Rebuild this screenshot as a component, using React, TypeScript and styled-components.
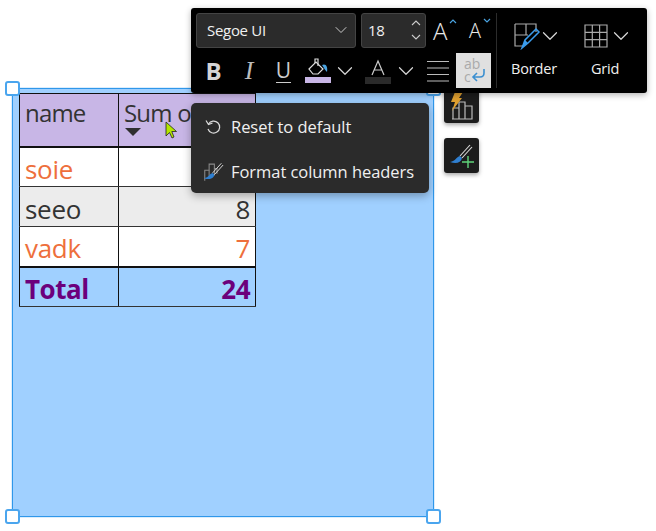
import styled, { createGlobalStyle } from "styled-components";
import { ChevronDown } from "lucide-react";

const Global = createGlobalStyle`
  html, body {
    margin: 0;
    background: #fff;
    font-family: "Open Sans", "Noto Sans", sans-serif;
  }
`;

const Page = styled.div`
  position: relative;
  width: 656px;
  height: 531px;
  overflow: hidden;
  padding: 88px 0 0 12px;
  box-sizing: border-box;
`;

const Visual = styled.div`
  position: relative;
  box-sizing: border-box;
  width: 422px;
  height: 429px;
  background: #a0d0ff;
  border: 1px solid #2f97ea;
  box-shadow: 0 0 1px #2f97ea;
  padding: 4px 6px;
`;

const Handle = styled.span<{ $x: "left" | "right"; $y: "top" | "bottom" }>`
  position: absolute;
  box-sizing: border-box;
  width: 15px;
  height: 15px;
  background: #fff;
  border: 2px solid #4aa5ee;
  border-radius: 3px;
  ${(p) => (p.$x === "left" ? "left: -8px;" : "right: -8px;")}
  ${(p) => (p.$y === "top" ? "top: -8px;" : "bottom: -8px;")}
`;

const Table = styled.table`
  border-collapse: collapse;
  table-layout: fixed;
  width: 236px;
  color: #333;
`;

const Head = styled.th`
  height: 53px;
  box-sizing: border-box;
  padding: 3px 0 0 5px;
  background: #c8b6e6;
  border: 1px solid #111;
  border-bottom-width: 2px;
  font-size: 24px;
  line-height: 32px;
  letter-spacing: -0.8px;
  font-weight: 400;
  text-align: left;
  vertical-align: top;
  white-space: nowrap;
  overflow: hidden;
`;

const Caret = styled.div`
  width: 0;
  height: 0;
  margin: -1px 0 0 1px;
  border-left: 8px solid transparent;
  border-right: 8px solid transparent;
  border-top: 8px solid #2f2f2f;
`;

const Cell = styled.td<{ $tone: "plain" | "grey" | "total"; $accent?: boolean; $right?: boolean }>`
  height: 40px;
  box-sizing: border-box;
  padding: 4px 5px 0;
  border-left: 1px solid #111;
  border-right: 1px solid #111;
  border-top: 1px solid #555;
  border-bottom: 1px solid #333;
  font-size: 26px;
  line-height: 32px;
  letter-spacing: -0.3px;
  text-align: ${(p) => (p.$right ? "right" : "left")};
  background: ${(p) => (p.$tone === "grey" ? "#ececec" : p.$tone === "total" ? "#a0d0ff" : "#fff")};
  color: ${(p) => (p.$tone === "total" ? "#6c007c" : p.$accent ? "#ee6f3c" : "#333")};
  font-weight: ${(p) => (p.$tone === "total" ? 700 : 400)};
  ${(p) => p.$tone === "total" && "border-top: 2px solid #111; letter-spacing: -0.5px;"}
`;

const Toolbar = styled.div`
  position: absolute;
  left: 191px;
  top: 8px;
  width: 456px;
  height: 85px;
  box-sizing: border-box;
  background: #000;
  border-radius: 3px;
  padding: 5px;
  display: flex;
  box-shadow: 0 2px 6px rgba(0, 0, 0, 0.3);
  color: #f0f0f0;
`;

const FontPanel = styled.div`
  width: 300px;
  flex: none;
  display: flex;
  flex-direction: column;
  gap: 5px;
`;

const Row = styled.div`
  display: flex;
  align-items: center;
`;

const Field = styled.div<{ $w: number; $pad: number }>`
  width: ${(p) => p.$w}px;
  flex: none;
  height: 35px;
  box-sizing: border-box;
  margin-right: 5px;
  padding: 0 4px 2px ${(p) => p.$pad}px;
  background: #2b2b2b;
  border: 1px solid #444;
  border-radius: 3px;
  display: flex;
  align-items: center;
  justify-content: space-between;
  font-size: 15px;
  letter-spacing: -0.3px;
`;

const Spin = styled.svg`
  width: 10px;
  height: 26px;
`;

const GrowBtn = styled.span`
  position: relative;
  display: block;
  width: 33px;
  padding-left: 2px;
  box-sizing: border-box;
  flex: none;
  font-size: 24px;
  line-height: 30px;
  font-weight: 300;
  color: #e8e8e8;
`;

const ShrinkBtn = styled(GrowBtn)`
  width: 32px;
  padding-left: 5px;
  font-size: 20px;
`;

const SizeMark = styled.svg<{ $left: number }>`
  position: absolute;
  left: ${(p) => p.$left}px;
  top: 2px;
`;

const FormatBtn = styled.span<{ $w: number; $ml?: number }>`
  width: ${(p) => p.$w}px;
  margin-left: ${(p) => p.$ml ?? 0}px;
  height: 35px;
  display: flex;
  align-items: center;
  justify-content: center;
  flex: none;
`;

const ActiveBtn = styled(FormatBtn)`
  background: #e0e0e0;
`;

const Bold = styled.b`
  font-size: 24px;
  color: #d4d4d4;
`;

const Italic = styled.i`
  font-family: "Liberation Serif", serif;
  font-size: 26px;
  color: #bbb;
`;

const Under = styled.span`
  font-size: 21px;
  font-weight: 400;
  line-height: 24px;
  color: #ccc;
  border-bottom: 1px solid #ccc;
`;

const Divider = styled.div`
  width: 1px;
  flex: none;
  height: 75px;
  background: #2c2c2c;
`;

const BigBtn = styled.div<{ $w: number }>`
  width: ${(p) => p.$w}px;
  flex: none;
  display: flex;
  flex-direction: column;
  align-items: center;
  font-size: 14.5px;
  line-height: 20px;
  letter-spacing: -0.2px;
  padding-top: 9px;
  gap: 9px;
`;

const IconRow = styled(Row)<{ $shift: number; $pull: number }>`
  height: 28px;
  margin-left: ${(p) => p.$shift}px;
  & > svg + svg {
    margin-left: ${(p) => p.$pull}px;
  }
`;

const ContextMenu = styled.div`
  position: absolute;
  left: 191px;
  top: 103px;
  width: 238px;
  height: 90px;
  box-sizing: border-box;
  background: #2b2b2b;
  border-radius: 5px;
  box-shadow: 0 3px 8px rgba(0, 0, 0, 0.3);
  padding: 3px 12px;
  color: #f0f0f0;
  font-size: 16.5px;
  letter-spacing: -0.05px;
`;

const MenuItem = styled.div`
  height: 41px;
  display: flex;
  align-items: center;
  gap: 8px;
`;

const MenuItemLow = styled(MenuItem)`
  margin-top: 4px;
  gap: 7px;
`;

const SideBtn = styled.div<{ $top: number }>`
  position: absolute;
  left: 444px;
  top: ${(p) => p.$top}px;
  width: 35px;
  height: 35px;
  background: #1c1c1c;
  border-radius: 3px;
  box-shadow: 0 2px 4px rgba(0, 0, 0, 0.35);
  display: flex;
  align-items: center;
  justify-content: center;
`;

const Pointer = styled.svg`
  position: absolute;
  left: 164px;
  top: 121px;
`;

const ChevronIcon = styled(ChevronDown)`
  flex: none;
`;

const Chevron = ({ size = 26 }: { size?: number }) => (
  <ChevronIcon size={size} color="#d8d8d8" strokeWidth={1.1} />
);

const Brush = () => (
  <g>
    <path d="M21 2 L11 13" stroke="#ddd" strokeWidth="1.1" fill="none" />
    <path d="M23 4 L13 15" stroke="#ddd" strokeWidth="1.1" fill="none" />
    <path d="M11 13 C7 14 7 18 1 19 C7 21 12 20 13 15 Z" fill="#2f7fd0" />
  </g>
);

export default function App() {
  return (
    <Page>
      <Global />
      <Visual>
        <Handle $x="left" $y="top" />
        <Handle $x="right" $y="top" />
        <Handle $x="left" $y="bottom" />
        <Handle $x="right" $y="bottom" />
        <Table>
          <colgroup>
            <col style={{ width: 99 }} />
            <col style={{ width: 137 }} />
          </colgroup>
          <thead>
            <tr>
              <Head>name</Head>
              <Head>
                Sum of
                <Caret />
              </Head>
            </tr>
          </thead>
          <tbody>
            <tr>
              <Cell $tone="plain" $accent>soie</Cell>
              <Cell $tone="plain" $accent $right>9</Cell>
            </tr>
            <tr>
              <Cell $tone="grey">seeo</Cell>
              <Cell $tone="grey" $right>8</Cell>
            </tr>
            <tr>
              <Cell $tone="plain" $accent>vadk</Cell>
              <Cell $tone="plain" $accent $right>7</Cell>
            </tr>
            <tr>
              <Cell $tone="total">Total</Cell>
              <Cell $tone="total" $right>24</Cell>
            </tr>
          </tbody>
        </Table>
      </Visual>

      <SideBtn $top={88}>
        <svg width="26" height="30" viewBox="0 0 26 30">
          <path d="M4 28V17H10V28M10 28V11H16V28M16 28V15H23V28H3" stroke="#bbb" strokeWidth="1.2" fill="none" />
          <path d="M6 1H14L10 7H13L3 20L6 11H2Z" fill="#e0a030" />
        </svg>
      </SideBtn>
      <SideBtn $top={138}>
        <svg width="26" height="26" viewBox="0 0 26 26">
          <Brush />
          <path d="M19 13V25M13 19H25" stroke="#5fd37a" strokeWidth="1.4" />
        </svg>
      </SideBtn>

      <ContextMenu>
        <MenuItem>
          <svg width="20" height="20" viewBox="0 0 20 20">
            <path d="M5.5 7 A6 6 0 1 1 5 12" stroke="#ddd" strokeWidth="1.2" fill="none" />
            <path d="M3 3.5 L5.5 7.5 L9.5 6" stroke="#ddd" strokeWidth="1.2" fill="none" />
          </svg>
          Reset to default
        </MenuItem>
        <MenuItemLow>
          <svg width="21" height="24" viewBox="0 0 24 24">
            <path d="M2 22V10H7V3H13V8H16V14" stroke="#8a8a8a" strokeWidth="1.2" fill="none" />
            <path d="M7 10V20M13 8V16" stroke="#8a8a8a" strokeWidth="1.2" />
            <Brush />
          </svg>
          Format column headers
        </MenuItemLow>
      </ContextMenu>

      <Toolbar>
        <FontPanel>
          <Row>
            <Field $w={160} $pad={10}>
              Segoe UI
              <Chevron size={20} />
            </Field>
            <Field $w={65} $pad={6}>
              18
              <Spin viewBox="0 0 10 26">
                <path d="M1 8L5 4L9 8M1 18L5 22L9 18" stroke="#ccc" strokeWidth="1.1" fill="none" />
              </Spin>
            </Field>
            <GrowBtn>
              A
              <SizeMark $left={17} width="10" height="6" viewBox="0 0 10 6">
                <path d="M2 5L5 2L8 5" stroke="#4aa3e0" strokeWidth="1.2" fill="none" />
              </SizeMark>
            </GrowBtn>
            <ShrinkBtn>
              A
              <SizeMark $left={18} width="10" height="6" viewBox="0 0 10 6">
                <path d="M2 1L5 4L8 1" stroke="#4aa3e0" strokeWidth="1.2" fill="none" />
              </SizeMark>
            </ShrinkBtn>
          </Row>
          <Row>
            <FormatBtn $w={35}><Bold>B</Bold></FormatBtn>
            <FormatBtn $w={36}><Italic>I</Italic></FormatBtn>
            <FormatBtn $w={33}><Under>U</Under></FormatBtn>
            <FormatBtn $w={36}>
              <svg width="28" height="26" viewBox="0 0 28 26">
                <path d="M5 11L12 4L19 11L14 16H9Z" stroke="#ddd" strokeWidth="1.2" fill="none" />
                <path d="M11 5V1H14V8" stroke="#ddd" strokeWidth="1.2" fill="none" />
                <path d="M18 7C22 5 24 9 23 14C21 12 20 10 18 7Z" fill="#4aa3e0" />
                <rect x="1" y="19" width="26" height="6" fill="#c8b6e6" />
              </svg>
            </FormatBtn>
            <FormatBtn $w={18}><Chevron /></FormatBtn>
            <FormatBtn $w={48}>
              <svg width="26" height="26" viewBox="0 0 26 26">
                <path d="M7 17L13 3L19 17M9 12H17" stroke="#ccc" strokeWidth="1.2" fill="none" />
                <rect x="0" y="19" width="26" height="7" fill="#2a2a2a" />
              </svg>
            </FormatBtn>
            <FormatBtn $w={8}><Chevron /></FormatBtn>
            <FormatBtn $w={36} $ml={10}>
              <svg width="24" height="24" viewBox="0 0 24 24">
                <path d="M1 2.5H23M1 9H23M1 15.5H23M1 22H23" stroke="#bbb" strokeWidth="1.2" />
              </svg>
            </FormatBtn>
            <ActiveBtn $w={35}>
              <svg width="26" height="28" viewBox="0 0 26 28">
                <text x="3" y="12" fontSize="14" fill="#aaa" fontFamily="Open Sans, sans-serif">ab</text>
                <text x="3" y="25" fontSize="14" fill="#aaa" fontFamily="Open Sans, sans-serif">c</text>
                <path d="M23 12V16C23 19 21 20 19 20H12M16 16L12 20L16 24" stroke="#3b8fd0" strokeWidth="1.6" fill="none" />
              </svg>
            </ActiveBtn>
          </Row>
        </FontPanel>
        <Divider />
        <BigBtn $w={74}>
          <IconRow $shift={8} $pull={-5}>
            <svg width="28" height="28" viewBox="0 0 28 28">
              <path d="M1 2H22V10M1 2V24H10M1 13H14M12 2V13" stroke="#aaa" strokeWidth="1.2" fill="none" />
              <path d="M8 26L11 18L22 7L25 10L14 21Z" stroke="#3b9cec" strokeWidth="1.5" fill="none" />
              <path d="M8 26L11 18L14 21Z" fill="#3b9cec" />
            </svg>
            <Chevron />
          </IconRow>
          Border
        </BigBtn>
        <BigBtn $w={68}>
          <IconRow $shift={7} $pull={-1}>
            <svg width="26" height="26" viewBox="0 0 26 26">
              <path d="M2 2H24V24H2ZM9.3 2V24M16.6 2V24M2 9.3H24M2 16.6H24" stroke="#aaa" strokeWidth="1.2" fill="none" />
            </svg>
            <Chevron />
          </IconRow>
          Grid
        </BigBtn>
      </Toolbar>

      <Pointer width="14" height="18" viewBox="0 0 14 18">
        <path d="M2 1V15L5.5 11.5L8 17L10 16L7.8 10.5H12.5Z" fill="#b4e600" stroke="#222" strokeWidth="0.8" />
      </Pointer>
    </Page>
  );
}
